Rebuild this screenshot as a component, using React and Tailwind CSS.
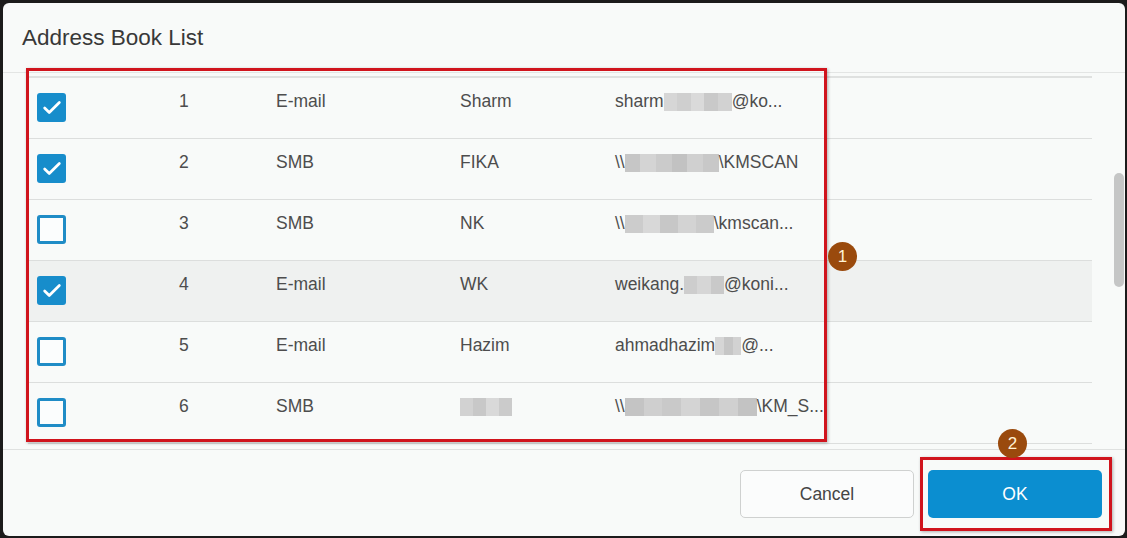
import { Check } from 'lucide-react';

const font = { fontFamily: '"Liberation Sans", Arial, sans-serif' };

const Blur = ({ w, shades }) => (
  <span className="inline-flex h-[18px] align-middle" style={{ width: w }}>
    {shades.map((c, i) => (
      <span key={i} className="h-full flex-1" style={{ backgroundColor: c }} />
    ))}
  </span>
);

const rows = [
  {
    n: 1, type: 'E-mail', name: 'Sharm', checked: true,
    addr: <>sharm<Blur w={68} shades={['#d6d6d6', '#cfcfcf', '#dadada', '#c9c9c9', '#d2d2d2']} />@ko...</>,
  },
  {
    n: 2, type: 'SMB', name: 'FIKA', checked: true,
    addr: <>\\<Blur w={94} shades={['#c6c6c6', '#d4d4d4', '#cbcbcb', '#c2c2c2', '#d0d0d0', '#c8c8c8']} />\KMSCAN</>,
  },
  {
    n: 3, type: 'SMB', name: 'NK', checked: false,
    addr: <>\\<Blur w={89} shades={['#cccccc', '#d8d8d8', '#c7c7c7', '#d3d3d3', '#cbcbcb']} />\kmscan...</>,
  },
  {
    n: 4, type: 'E-mail', name: 'WK', checked: true, hl: true,
    addr: <>weikang.<Blur w={40} shades={['#cdcdcd', '#d6d6d6', '#c9c9c9']} />@koni...</>,
  },
  {
    n: 5, type: 'E-mail', name: 'Hazim', checked: false,
    addr: <>ahmadhazim<Blur w={26} shades={['#d6d6d6', '#c6c6c6', '#d2d2d2']} />@...</>,
  },
  {
    n: 6, type: 'SMB', name: null, checked: false,
    addr: <>\\<Blur w={132} shades={['#c4c4c4', '#cfcfcf', '#c9c9c9', '#d4d4d4', '#c6c6c6', '#d0d0d0', '#c3c3c3']} />\KM_S...</>,
  },
];

const Box = ({ checked }) =>
  checked ? (
    <div className="w-[29px] h-[29px] rounded-[3px] bg-[#178dcb] flex items-center justify-center">
      <Check size={22} strokeWidth={3} className="text-white" />
    </div>
  ) : (
    <div className="w-[29px] h-[29px] rounded-[3px] border-[3px] border-[#1f8cc6] bg-[#fbfdfd]" />
  );

const Badge = ({ n, className }) => (
  <div
    className={`absolute w-[29px] h-[29px] rounded-full bg-[#9a4a0d] text-[#fff3d6] text-[17px] flex items-center justify-center ${className}`}
  >
    {n}
  </div>
);

export default function App() {
  return (
    <div className="w-[1127px] h-[538px] bg-[#1b1b1b] pt-[3px] pl-[3px] pr-[2px] pb-[2px]" style={font}>
      <div className="relative w-full h-full rounded-md bg-[#f8faf9] flex flex-col overflow-hidden">
        <div className="h-[70px] shrink-0 flex items-center pl-[19px] border-b border-[#e3e5e4]">
          <h1 className="text-[22.5px] text-[#383838]">Address Book List</h1>
        </div>

        <div className="flex h-[376px] shrink-0">
          <div className="flex-1 pl-[25px] pr-[22px] pt-[3px] overflow-hidden">
            <div className="border-t-2 border-[#dfe1e0]">
              {rows.map((r) => (
                <div
                  key={r.n}
                  className={`h-[61px] flex items-start border-b border-[#dcdedd] text-[17.5px] text-[#4d4d4d] ${r.hl ? 'bg-[#eff1f0]' : ''}`}
                >
                  <div className="w-[151px] pl-[9px] pt-[15px]">
                    <Box checked={r.checked} />
                  </div>
                  <div className="w-[97px] pt-[13px] leading-5">{r.n}</div>
                  <div className="w-[184px] pt-[13px] leading-5">{r.type}</div>
                  <div className="w-[155px] pt-[13px] leading-5">
                    {r.name ?? <Blur w={52} shades={['#d2d2d2', '#c8c8c8', '#d9d9d9', '#cbcbcb']} />}
                  </div>
                  <div className="pt-[13px] leading-5 whitespace-nowrap">{r.addr}</div>
                </div>
              ))}
            </div>
          </div>
          <div className="w-[11px] pt-[100px]">
            <div className="w-[10px] h-[114px] rounded-full bg-[#c5c6c6]" />
          </div>
        </div>

        <div className="flex-1 border-t border-[#dfe1e0] flex justify-end items-start pt-[20px] pr-[23px] gap-[14px]">
          <button className="w-[174px] h-[48px] rounded-[5px] border border-[#cfd1d0] bg-[#fbfcfc] text-[17.5px] text-[#454545]">
            Cancel
          </button>
          <button className="w-[174px] h-[48px] rounded-[5px] bg-[#0b8ed0] text-[17.5px] text-white">
            OK
          </button>
        </div>

        <div className="absolute left-[23px] top-[65px] w-[801px] h-[374px] border-[3px] border-[#d0141d] shadow-[1px_1px_3px_rgba(0,0,0,0.3)]" />
        <Badge n={1} className="left-[825px] top-[239px]" />
        <div className="absolute left-[917px] top-[454px] w-[192px] h-[74px] border-[3px] border-[#d0141d] shadow-[1px_1px_3px_rgba(0,0,0,0.3)]" />
        <Badge n={2} className="left-[995px] top-[426px]" />
      </div>
    </div>
  );
}
